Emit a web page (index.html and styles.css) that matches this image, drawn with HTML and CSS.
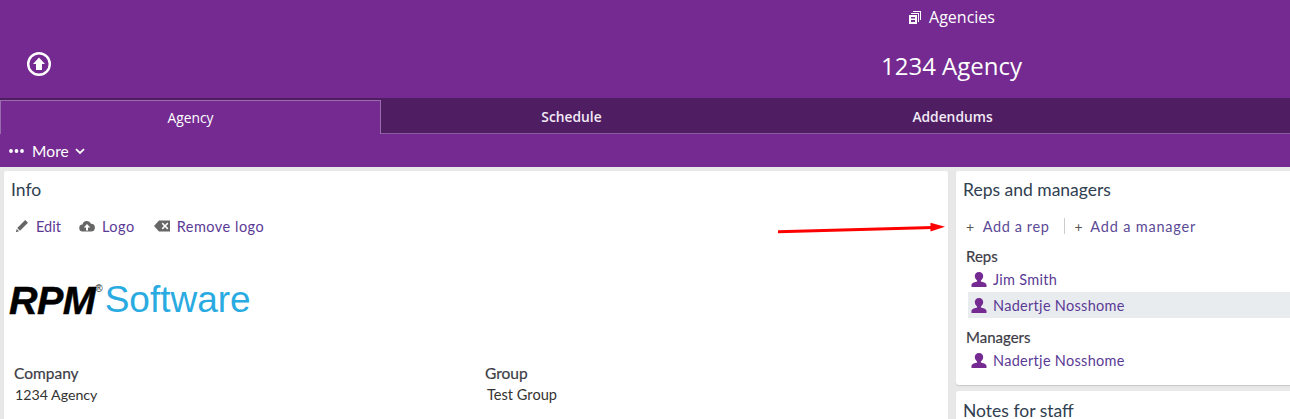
FILE: index.html
```html
<!DOCTYPE html>
<html lang="en">
<head>
<meta charset="utf-8">
<title>1234 Agency</title>
<link rel="stylesheet" href="styles.css">
</head>
<body>
<header class="hero">
  <button class="up" aria-label="Up">
    <svg width="26" height="26" viewBox="0 0 26 26"><circle cx="13" cy="13" r="10.8" fill="none" stroke="#fff" stroke-width="2.4"/><path d="M13 6.600 19 13h-3v6h-6v-6H7z" fill="#fff"/></svg>
  </button>
  <div class="crumb">
    <svg width="12" height="13" viewBox="0 0 12 13"><path d="M4 0h8v9h-1V1H4z" fill="#fff"/><path d="M2 2h8v9H9V3H2z" fill="#fff"/><path fill-rule="evenodd" d="M0 4h8v9H0zM2 6v1.500h4V6zm0 3v2h4V9z" fill="#fff"/></svg>
    <span>Agencies</span>
  </div>
  <h1 class="title">1234 Agency</h1>
</header>
<nav class="tabs">
  <a class="tab active">Agency</a>
  <a class="tab">Schedule</a>
  <a class="tab">Addendums</a>
  <span class="tab-rest"></span>
</nav>
<div class="morebar">
  <svg width="15" height="4" viewBox="0 0 15 4"><circle cx="2" cy="2" r="1.900" fill="#fff"/><circle cx="7.500" cy="2" r="1.900" fill="#fff"/><circle cx="13" cy="2" r="1.900" fill="#fff"/></svg>
  <span class="more-label">More</span>
  <svg width="10" height="7" viewBox="0 0 10 7"><path d="M1 1.200 5 5l4-3.800" fill="none" stroke="#fff" stroke-width="1.800"/></svg>
</div>
<main class="content">
  <section class="panel info">
    <h2>Info</h2>
    <div class="actions">
      <a class="action">
        <svg width="14" height="14" viewBox="0 0 14 14"><path d="M10.200 1 13 3.800 5 11.800 2.200 9zM1.700 10l2.300 2.300-3.200 1z" fill="#666"/></svg>Edit</a>
      <a class="action">
        <svg width="16" height="12" viewBox="0 0 16 12"><path fill-rule="evenodd" d="M4 11.500a3.500 3.500 0 0 1-.5-7A4.500 4.500 0 0 1 12 3.700a3.900 3.900 0 0 1 0 7.800zM8 4 4.800 7.500H7v3h2v-3h2.200z" fill="#666"/></svg>Logo</a>
      <a class="action">
        <svg width="16" height="12" viewBox="0 0 16 12"><path fill-rule="evenodd" d="M5 .5h11v11H5L0 6zM7.700 3.700 9.900 6 7.700 8.300l1.100 1.100L11 7.100l2.200 2.300 1.100-1.100L12.100 6l2.200-2.300-1.100-1.100L11 4.900 8.800 2.600z" fill="#666"/></svg>Remove logo</a>
    </div>
    <div class="logo"><span class="rpm">RPM</span><span class="reg">®</span><span class="soft">Software</span></div>
    <div class="fields">
      <div class="field"><h3>Company</h3><p>1234 Agency</p></div>
      <div class="field"><h3>Group</h3><p class="shift">Test Group</p></div>
    </div>
  </section>
  <aside class="side">
    <section class="panel reps">
      <h2>Reps and managers</h2>
      <div class="adds">
        <a class="add first"><span class="plus">+</span>Add a rep</a>
        <a class="add second"><span class="plus">+</span>Add a manager</a>
      </div>
      <h3>Reps</h3>
      <a class="person top"><svg class="pic" width="16" height="16" viewBox="0 0 16 16"><path d="M8 0c2.600 0 4.200 1.700 4.200 4 0 1.800-.9 3.400-2.300 4.400v1.100c2 .6 5.200 1.300 5.600 3.300V15H.5v-2.200c.4-2 3.600-2.700 5.600-3.300V8.400C4.700 7.400 3.800 5.800 3.800 4 3.800 1.700 5.400 0 8 0z" fill="#742a90"/></svg>Jim Smith</a>
      <a class="person hl"><svg class="pic" width="16" height="16" viewBox="0 0 16 16"><path d="M8 0c2.600 0 4.200 1.700 4.200 4 0 1.800-.9 3.400-2.300 4.400v1.100c2 .6 5.200 1.300 5.600 3.300V15H.5v-2.200c.4-2 3.600-2.700 5.600-3.300V8.400C4.700 7.400 3.800 5.800 3.800 4 3.800 1.700 5.400 0 8 0z" fill="#742a90"/></svg>Nadertje Nosshome</a>
      <h3 class="mgr">Managers</h3>
      <a class="person"><svg class="pic" width="16" height="16" viewBox="0 0 16 16"><path d="M8 0c2.600 0 4.200 1.700 4.200 4 0 1.800-.9 3.400-2.300 4.400v1.100c2 .6 5.200 1.300 5.600 3.300V15H.5v-2.200c.4-2 3.600-2.700 5.600-3.300V8.400C4.700 7.400 3.800 5.800 3.800 4 3.800 1.700 5.400 0 8 0z" fill="#742a90"/></svg>Nadertje Nosshome</a>
    </section>
    <section class="panel notes"><h2>Notes for staff</h2></section>
  </aside>
</main>
<svg class="arrow" width="172" height="14" viewBox="0 0 172 14"><path d="M0 9.700 155 5.400" stroke="#f00" stroke-width="3" fill="none"/><path d="M152.500 .8 167 4.800 152.500 9.500z" fill="#f00"/></svg>
</body>
</html>
```
FILE: styles.css
```css
* { box-sizing: border-box; }
html, body { margin: 0; height: 419px; overflow: hidden; }
body { position: relative; background: #e8e8e8; font-family: "Lato", sans-serif; color: #3c3c46; }
h1, h2, h3, p { margin: 0; font-weight: 400; }
a { color: #5b3a96; }

.hero { height: 98px; background: #742a90; color: #fff; display: grid; grid-template-columns: 1fr; justify-items: center; padding-left: 613px; position: relative; font-family: "Open Sans", sans-serif; }
.up { position: absolute; left: 26px; top: 51px; width: 26px; height: 26px; padding: 0; border: 0; background: none; }
.crumb { display: flex; align-items: center; gap: 8px; height: 34px; font-size: 16px; }
.crumb svg { margin-left: 1px; }
.title { font-size: 24px; line-height: 32px; height: 32px; }

.tabs { height: 36px; display: flex; background: #4e1d62; padding-top: 2px; font-family: "Open Sans", sans-serif; font-size: 13.800px; font-weight: 600; }
.tab { width: 381px; color: #f3eaf6; display: flex; align-items: center; justify-content: center; border-bottom: 1px solid #8a5aa0; padding-bottom: 1px; }
.tab.active { background: #742a90; border: 1px solid #9a6cae; border-bottom: 0; font-weight: 400; color: #fff; }
.tab-rest { flex: 1; border-bottom: 1px solid #8a5aa0; }

.morebar { height: 33px; background: #742a90; color: #fff; display: flex; align-items: center; gap: 7px; padding: 1px 0 0 9px; font-size: 15.500px; }
.more-label { letter-spacing: .1px; margin-left: 1px; }
.morebar svg:last-child { margin-left: -1px; }

.content { display: flex; gap: 8px; padding: 4px 0 0 4px; align-items: flex-start; }
.panel { background: #fff; border-radius: 3px; box-shadow: 0 1px 1px rgba(0,0,0,.15); }
.panel h2 { font-size: 17.500px; line-height: 20px; color: #2f4050; }
.info { width: 944px; height: 260px; padding: 9px 7px; }
.actions { display: flex; gap: 19px; margin-top: 16px; padding-left: 4px; height: 20px; align-items: center; }
.action { display: flex; align-items: center; gap: 7px; font-size: 14.500px; letter-spacing: .5px; }
.action:first-child { letter-spacing: 0; margin-right: -1px; }
.action svg { flex: none; }
.logo { height: 60px; margin-top: 42px; margin-left: -2px; font-family: "Liberation Sans", sans-serif; font-size: 37px; line-height: 44px; display: flex; align-items: flex-start; white-space: nowrap; }
.rpm { color: #000; font-weight: 700; font-style: italic; font-size: 39.500px; letter-spacing: -.5px; -webkit-text-stroke: .5px #000; }
.reg { color: #222; font-size: 10px; line-height: 22px; margin-right: 2px; }
.soft { color: #29abe2; }
.fields { display: flex; margin-top: 26px; padding-left: 3px; }
.field { flex: 0 0 471px; }
.field h3 { font-size: 15.500px; line-height: 18px; -webkit-text-stroke: .2px #3c3c46; }
.field p { font-size: 14.200px; line-height: 18px; margin-top: 4px; padding-left: 1px; color: #333; }
.field .shift { padding-left: 2px; font-size: 14.600px; }

.side { width: 345px; display: flex; flex-direction: column; gap: 6px; flex: none; }
.reps { height: 214px; padding: 9px 7px; }
.notes { height: 60px; padding: 10px 7px; }
.adds { display: flex; margin-top: 16px; height: 20px; align-items: center; padding-left: 3px; }
.add { display: flex; align-items: center; font-size: 14.500px; letter-spacing: .8px; gap: 8px; color: #5b4a96; }
.add.first { letter-spacing: .6px; }
.plus { color: #555; font-size: 14px; }
.add.second { margin-left: 15px; padding-left: 9px; height: 16px; border-left: 1px solid #ccc; gap: 7px; }
.reps h3 { font-size: 15px; line-height: 18px; margin: 11px 0 0 3px; -webkit-text-stroke: .2px #3c3c46; }
.reps h3.mgr { margin-top: 10px; }
.person { display: flex; align-items: center; height: 26px; margin-left: 5px; padding: 1px 0 0 3px; gap: 6px; font-size: 14.500px; letter-spacing: .3px; }
.person.top { margin-top: 1px; }
.person.hl { background: #e9ecef; }
.mgr + .person { margin-top: 1px; }
.pic { flex: none; }

.arrow { position: absolute; left: 778px; top: 222px; }
```
